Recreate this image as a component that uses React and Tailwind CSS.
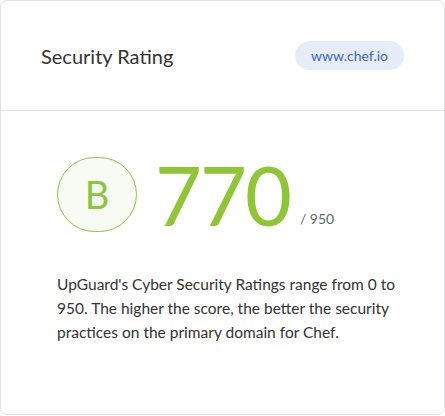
import React from 'react';

const App = () => {
    return (
        <div className="w-[445px] h-[416px] bg-white" style={{ fontFamily: 'Lato, "Open Sans", sans-serif' }}>
            <div className="w-[445px] h-[415px] border border-[#dfe2e6] rounded-[7px] bg-white flex flex-col">
                {/* header */}
                <div className="h-[110px] shrink-0 flex items-center justify-between pl-[40px] pr-[40px] border-b border-[#dfe2e6]">
                    <h2 className="text-[20px] text-[#333] font-normal">Security Rating</h2>
                    <span className="h-[29px] px-[16px] flex items-center rounded-full bg-[#e6edf9] text-[14px] text-[#3b64c4]">
                        www.chef.io
                    </span>
                </div>

                {/* body */}
                <div className="pl-[56px] pr-[30px] pt-[43px]">
                    <div className="h-[80px] flex items-center">
                        <div className="w-[80px] h-[75px] rounded-full border-[1.5px] border-[#8cc63f] bg-[#f8faf4] flex items-center justify-center">
                            <span className="text-[38px] font-normal text-[#8cc63f] leading-none">B</span>
                        </div>
                        <div className="ml-[18px] flex items-baseline">
                            <span className="text-[81px] font-normal tracking-[-2px] text-[#8fc734] leading-[81px]">770</span>
                            <span className="ml-[10px] -translate-y-[2px] text-[14px] text-[#666]">/ 950</span>
                        </div>
                    </div>
                    <p className="mt-[38px] text-[15.5px] leading-[24px] text-[#333]">
                        UpGuard's Cyber Security Ratings range from 0 to 950. The higher the score, the better the security practices on the primary domain for Chef.
                    </p>
                </div>
            </div>
        </div>
    );
};

export default App;
